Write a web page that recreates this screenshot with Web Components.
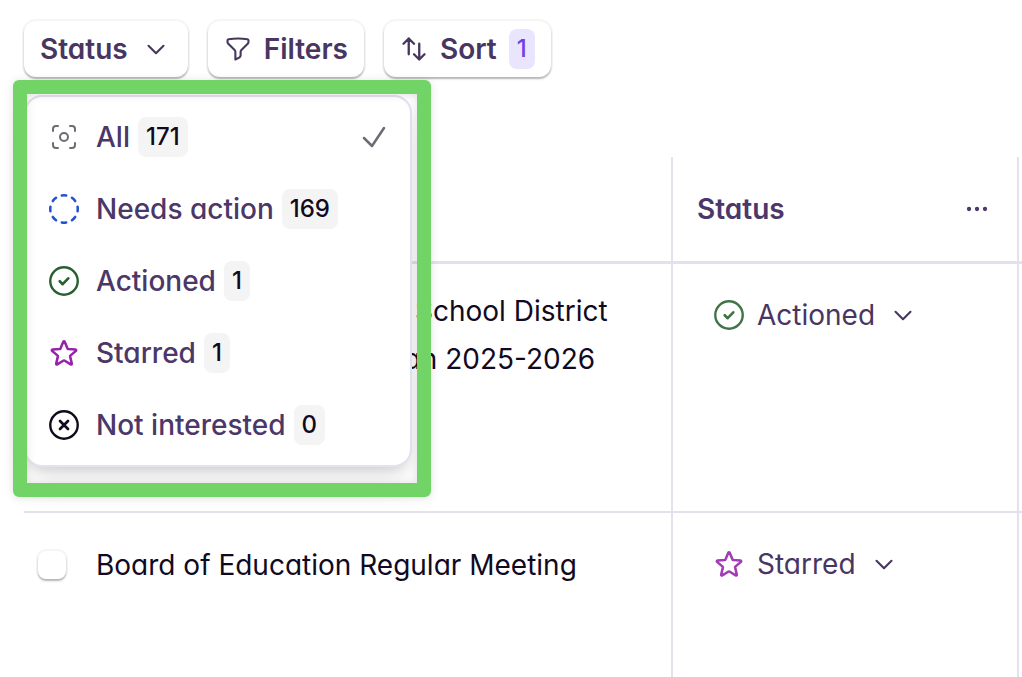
<!DOCTYPE html>
<html lang="en">
<head>
<meta charset="utf-8">
<meta name="viewport" content="width=device-width, initial-scale=1">
<title>Meetings</title>
<style>
    body {
        margin: 0;
        background: #fff;
        color: #110a1f;
        font-family: Inter, "Liberation Sans", sans-serif;
        font-size: 28px;
        line-height: 48px;
        font-feature-settings: "cv11";
        --ink: #483661;
        --line: #e5e0ee;
    }
</style>
</head>
<body>
<meetings-page></meetings-page>

<script>
const icons = {
    chevron: `<path stroke-width="2.1" d="m19.5 8.75-7.5 7.5-7.5-7.5"/>`,
    funnel: `<path stroke-width="1.8" d="M12 3c2.755 0 5.455.232 8.083.678.533.09.917.556.917 1.096v1.044a2.25 2.25 0 0 1-.659 1.591l-5.432 5.432a2.25 2.25 0 0 0-.659 1.591v2.927a2.25 2.25 0 0 1-1.244 2.013L9.75 21v-6.568a2.25 2.25 0 0 0-.659-1.591L3.659 7.409A2.25 2.25 0 0 1 3 5.818V4.774c0-.54.384-1.006.917-1.096A48.32 48.32 0 0 1 12 3Z"/>`,
    sort: `<path stroke-width="2" d="M3 7.5 7.5 3m0 0L12 7.5M7.5 3v13.5m13.5 0L16.5 21m0 0L12 16.5m4.5 4.5V7.5"/>`,
    check: `<path stroke-width="1.9" d="m4.5 12.75 6 6 9-13.5"/>`,
    dots: `<path stroke-width="1.7" d="M6.75 12a.75.75 0 1 1-1.5 0 .75.75 0 0 1 1.5 0ZM12.75 12a.75.75 0 1 1-1.5 0 .75.75 0 0 1 1.5 0ZM18.75 12a.75.75 0 1 1-1.5 0 .75.75 0 0 1 1.5 0Z"/>`,
    all: `<path d="M7.5 3.75H6A2.25 2.25 0 0 0 3.75 6v1.5M16.5 3.75H18A2.25 2.25 0 0 1 20.25 6v1.5m0 9V18A2.25 2.25 0 0 1 18 20.25h-1.5m-9 0H6A2.25 2.25 0 0 1 3.75 18v-1.5M15 12a3 3 0 1 1-6 0 3 3 0 0 1 6 0Z"/>`,
    needs: `<circle cx="12" cy="12" r="10.3" pathLength="80" stroke-width="1.9" stroke-dasharray="4.2 5.8" stroke-dashoffset="2.1"/>`,
    actioned: `<circle cx="12" cy="12" r="10.3" stroke-width="1.8"/><path stroke-width="2" d="m8.8 12.2 2.2 2.2 4.2-4.4"/>`,
    star: `<path stroke-width="1.9" d="M11.48 3.499a.562.562 0 0 1 1.04 0l2.125 5.111a.563.563 0 0 0 .475.345l5.518.442c.499.04.701.663.321.988l-4.204 3.602a.563.563 0 0 0-.182.557l1.285 5.385a.562.562 0 0 1-.84.61l-4.725-2.885a.562.562 0 0 0-.586 0L6.982 20.54a.562.562 0 0 1-.84-.61l1.285-5.386a.562.562 0 0 0-.182-.557l-4.204-3.602a.562.562 0 0 1 .321-.988l5.518-.442a.563.563 0 0 0 .475-.345L11.48 3.5Z"/>`,
    cross: `<circle cx="12" cy="12" r="10.3" stroke-width="1.8"/><path stroke-width="2" d="m9 9 6 6m0-6-6 6"/>`,
};

class UiIcon extends HTMLElement {
    constructor() {
        super();
        this.attachShadow({ mode: "open" });
    }

    connectedCallback() {
        this.shadowRoot.innerHTML = `
            <style>
                :host {
                    display: block;
                    flex: none;
                    width: var(--icon-size, 32px);
                    height: var(--icon-size, 32px);
                }
                :host([name="chevron"]) {
                    width: 24px;
                    height: 24px;
                    margin: 0 4px;
                }
                svg {
                    display: block;
                    width: 100%;
                    height: 100%;
                }
            </style>
            <svg viewBox="0 0 24 24" fill="none" stroke="currentColor" stroke-width="1.5" stroke-linecap="round" stroke-linejoin="round" aria-hidden="true">
                ${icons[this.getAttribute("name")]}
            </svg>
        `;
    }
}

class CountBadge extends HTMLElement {
    constructor() {
        super();
        this.attachShadow({ mode: "open" }).innerHTML = `
            <style>
                :host {
                    display: block;
                    padding: 0 8px;
                    border-radius: 8px;
                    background: #f4f4f5;
                    color: #110a1f;
                    font-size: 24px;
                    font-weight: 500;
                    line-height: 40px;
                }
                :host([accent]) {
                    background: #e9e5fc;
                    color: #7040e6;
                }
            </style>
            <slot></slot>
        `;
    }
}

class ToolbarButton extends HTMLElement {
    constructor() {
        super();
        this.attachShadow({ mode: "open" }).innerHTML = `
            <style>
                :host {
                    display: block;
                    --icon-size: 28px;
                }
                button {
                    display: flex;
                    align-items: center;
                    gap: 12px;
                    height: 56px;
                    padding: 0 16px;
                    border: 0;
                    border-radius: 12px;
                    background: #fff;
                    box-shadow: 0 0 0 2px rgba(0, 0, 0, .04), 0 2px 2px rgba(0, 0, 0, .26);
                    color: var(--ink);
                    font: inherit;
                    font-weight: 600;
                    font-feature-settings: inherit;
                    cursor: pointer;
                }
            </style>
            <button type="button"><slot></slot></button>
        `;
    }
}

class StatusMenu extends HTMLElement {
    constructor() {
        super();
        this.attachShadow({ mode: "open" }).innerHTML = `
            <style>
                :host {
                    display: block;
                    box-sizing: border-box;
                    width: 388px;
                    padding: 4px;
                    border: 2px solid #e4e1f0;
                    border-radius: 18px;
                    background: #fff;
                    box-shadow: 0 18px 28px -6px rgba(0, 0, 0, .1), 0 6px 12px -4px rgba(0, 0, 0, .12);
                }
                /* green callout around the open menu */
                .callout {
                    position: absolute;
                    inset: -17px -21px -32px -13px;
                    border: 14px solid #72d466;
                    border-radius: 6px;
                    filter: drop-shadow(0 1px 4px rgba(0, 0, 0, .12));
                    pointer-events: none;
                }
            </style>
            <div role="menu"><slot></slot></div>
            <div class="callout"></div>
        `;
    }
}

class MenuItem extends HTMLElement {
    constructor() {
        super();
        this.attachShadow({ mode: "open" });
    }

    connectedCallback() {
        const selected = this.hasAttribute("selected");
        this.shadowRoot.innerHTML = `
            <style>
                :host {
                    display: block;
                }
                button {
                    display: flex;
                    align-items: center;
                    gap: 8px;
                    width: 100%;
                    height: 72px;
                    padding: 0 16px 0 18px;
                    border: 0;
                    border-radius: 12px;
                    background: none;
                    color: #4b3768;
                    font: inherit;
                    font-weight: 500;
                    font-feature-settings: inherit;
                    text-align: left;
                    cursor: pointer;
                }
                .icon {
                    margin-right: 8px;
                    color: ${this.getAttribute("color")};
                }
                .tick {
                    margin-left: auto;
                    color: #6f6b76;
                }
            </style>
            <button type="button" role="menuitemradio" aria-checked="${selected}">
                <ui-icon class="icon" name="${this.getAttribute("icon")}"></ui-icon>
                <span><slot></slot></span>
                <count-badge>${this.getAttribute("count")}</count-badge>
                ${selected ? `<ui-icon class="tick" name="check"></ui-icon>` : ""}
            </button>
        `;
    }
}

class StatusPicker extends HTMLElement {
    constructor() {
        super();
        this.attachShadow({ mode: "open" });
    }

    connectedCallback() {
        this.shadowRoot.innerHTML = `
            <style>
                :host {
                    display: block;
                }
                button {
                    display: flex;
                    align-items: center;
                    gap: 12px;
                    height: 56px;
                    padding: 0 16px;
                    border: 0;
                    background: none;
                    color: var(--ink);
                    font: inherit;
                    font-feature-settings: inherit;
                    cursor: pointer;
                }
                .icon {
                    color: ${this.getAttribute("color")};
                }
            </style>
            <button type="button">
                <ui-icon class="icon" name="${this.getAttribute("icon")}"></ui-icon>
                <span><slot></slot></span>
                <ui-icon name="chevron"></ui-icon>
            </button>
        `;
    }
}

class MeetingsTable extends HTMLElement {
    constructor() {
        super();
        this.attachShadow({ mode: "open" }).innerHTML = `
            <style>
                :host {
                    display: block;
                    padding-left: 24px;
                }
                table {
                    width: 100%;
                    table-layout: fixed;
                    border-collapse: separate;
                    border-spacing: 0;
                }
                .status-col {
                    width: 346px;
                }
                .next-col {
                    width: 3px;
                }
                th, td {
                    box-sizing: border-box;
                    padding: 0;
                    border-right: 2px solid var(--line);
                    text-align: left;
                    vertical-align: top;
                }
                th:last-child, td:last-child {
                    border-right: 0;
                }
                th {
                    height: 107px;
                    border-bottom: 3px solid var(--line);
                    vertical-align: middle;
                    color: #4b3768;
                    font-weight: 600;
                }
                td {
                    height: 249px;
                    padding-top: 23px;
                    border-bottom: 2px solid var(--line);
                }
                .head {
                    display: flex;
                    align-items: center;
                    justify-content: space-between;
                    padding: 0 24px;
                }
                .head button {
                    padding: 0;
                    border: 0;
                    background: none;
                    color: inherit;
                    cursor: pointer;
                }
                .meeting {
                    display: flex;
                    gap: 30px;
                    padding-left: 14px;
                }
                input {
                    appearance: none;
                    flex: none;
                    width: 28px;
                    height: 28px;
                    margin: 15px 0;
                    border-radius: 8px;
                    background: #fff;
                    box-shadow: 0 0 0 2px rgba(0, 0, 0, .04), 0 2px 2px rgba(0, 0, 0, .26);
                }
                label {
                    display: grid;
                    align-items: center;
                    min-height: 58px;
                }
                label.long {
                    padding-left: 283px;
                    text-indent: 36px;
                }
                .status {
                    padding-left: 24px;
                }
            </style>
            <table>
                <colgroup>
                    <col>
                    <col class="status-col">
                    <col class="next-col">
                </colgroup>
                <thead>
                    <tr>
                        <th></th>
                        <th>
                            <div class="head">
                                Status
                                <button type="button" aria-label="Column options"><ui-icon name="dots"></ui-icon></button>
                            </div>
                        </th>
                        <th></th>
                    </tr>
                </thead>
                <tbody>
                    <tr>
                        <td>
                            <div class="meeting">
                                <input type="checkbox" id="row-1">
                                <label class="long" for="row-1"><span>School District<br>Plan 2025-2026</span></label>
                            </div>
                        </td>
                        <td><div class="status"><status-picker icon="actioned" color="#427348">Actioned</status-picker></div></td>
                        <td></td>
                    </tr>
                    <tr>
                        <td>
                            <div class="meeting">
                                <input type="checkbox" id="row-2">
                                <label for="row-2">Board of Education Regular Meeting</label>
                            </div>
                        </td>
                        <td><div class="status"><status-picker icon="star" color="#a13cb4">Starred</status-picker></div></td>
                        <td></td>
                    </tr>
                </tbody>
            </table>
        `;
    }
}

class MeetingsPage extends HTMLElement {
    constructor() {
        super();
        this.attachShadow({ mode: "open" }).innerHTML = `
            <style>
                :host {
                    display: flex;
                    flex-direction: column;
                    gap: 80px;
                    box-sizing: border-box;
                    height: 100vh;
                    padding-top: 21px;
                    overflow: hidden;
                }
                nav {
                    display: flex;
                    gap: 20px;
                    padding: 0 24px;
                }
                .dropdown {
                    position: relative;
                }
                status-menu {
                    position: absolute;
                    z-index: 1;
                    top: calc(100% + 18px);
                    left: 0;
                }
            </style>
            <nav>
                <div class="dropdown">
                    <toolbar-button>Status <ui-icon name="chevron"></ui-icon></toolbar-button>
                    <status-menu>
                        <menu-item icon="all" color="#6f6b76" count="171" selected>All</menu-item>
                        <menu-item icon="needs" color="#2450d3" count="169">Needs action</menu-item>
                        <menu-item icon="actioned" color="#286030" count="1">Actioned</menu-item>
                        <menu-item icon="star" color="#9624ab" count="1">Starred</menu-item>
                        <menu-item icon="cross" color="#110a1f" count="0">Not interested</menu-item>
                    </status-menu>
                </div>
                <toolbar-button><ui-icon name="funnel"></ui-icon> Filters</toolbar-button>
                <toolbar-button><ui-icon name="sort"></ui-icon> Sort <count-badge accent>1</count-badge></toolbar-button>
            </nav>
            <meetings-table></meetings-table>
        `;
    }
}

customElements.define("ui-icon", UiIcon);
customElements.define("count-badge", CountBadge);
customElements.define("toolbar-button", ToolbarButton);
customElements.define("status-menu", StatusMenu);
customElements.define("menu-item", MenuItem);
customElements.define("status-picker", StatusPicker);
customElements.define("meetings-table", MeetingsTable);
customElements.define("meetings-page", MeetingsPage);
</script>
</body>
</html>
